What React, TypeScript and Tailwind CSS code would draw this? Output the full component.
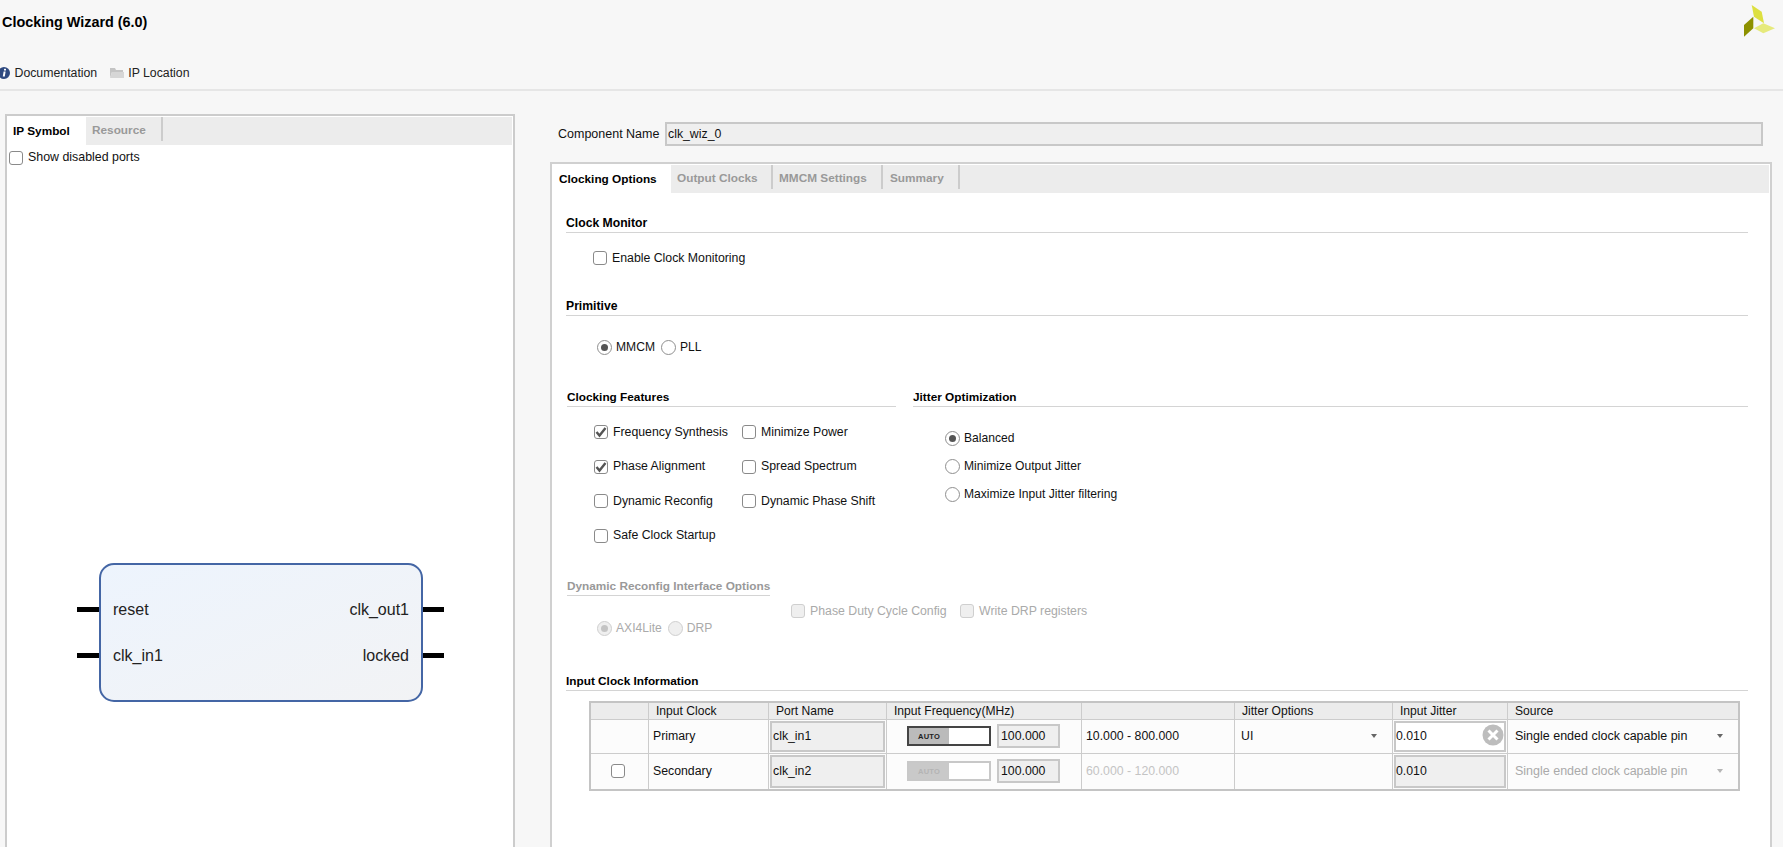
import type { ReactNode } from "react";

const font = "font-['Liberation_Sans',Arial,sans-serif]";

const Check = ({ checked, disabled }: { checked?: boolean; disabled?: boolean }) => (
  <span
    className={`flex h-[14px] w-[14px] shrink-0 items-center justify-center rounded-[3px] border-[1.5px] ${
      disabled ? "border-[#cfcfcf] bg-[#efefef]" : "border-[#8a8a8a] bg-white"
    }`}
  >
    {checked && (
      <svg width="12" height="12" viewBox="0 0 12 12">
        <path d="M1.5 6 L4.5 9.5 L10.5 2" fill="none" stroke="#555" strokeWidth="2.4" />
      </svg>
    )}
  </span>
);

const Radio = ({ checked, disabled }: { checked?: boolean; disabled?: boolean }) => (
  <span
    className={`flex h-[15px] w-[15px] shrink-0 items-center justify-center rounded-full border-[1.5px] ${
      disabled ? "border-[#cfcfcf] bg-[#efefef]" : "border-[#8f8f8f] bg-white"
    }`}
  >
    {checked && <span className={`h-[7px] w-[7px] rounded-full ${disabled ? "bg-[#c4c4c4]" : "bg-[#555]"}`} />}
  </span>
);

const Opt = ({ label, checked, disabled, className = "" }: { label: string; checked?: boolean; disabled?: boolean; className?: string }) => (
  <div className={`flex items-center gap-[5px] ${disabled ? "text-[#aaa]" : "text-[#111]"} ${className}`}>
    <Check checked={checked} disabled={disabled} />
    <span>{label}</span>
  </div>
);

const RadioOpt = ({ label, checked, disabled, className = "" }: { label: string; checked?: boolean; disabled?: boolean; className?: string }) => (
  <div className={`flex items-center gap-[4px] text-[12.1px] ${disabled ? "text-[#aaa]" : "text-[#111]"} ${className}`}>
    <Radio checked={checked} disabled={disabled} />
    <span>{label}</span>
  </div>
);

const SectionHead = ({ title, className = "", muted }: { title: string; className?: string; muted?: boolean }) => (
  <div className={`h-[19px] whitespace-nowrap border-b border-[#d4d4d4] font-bold leading-[18px] ${muted ? "text-[#999]" : "text-black"} ${className}`}>
    {title}
  </div>
);

const Arrow = ({ muted }: { muted?: boolean }) => (
  <svg width="6" height="4" viewBox="0 0 6 4" className="shrink-0">
    <path d="M0 0 H6 L3 4 Z" fill={muted ? "#b5b5b5" : "#666"} />
  </svg>
);

const Toggle = ({ disabled }: { disabled?: boolean }) => (
  <div className={`flex h-5 w-[84px] border-2 ${disabled ? "border-[#c8c8c8]" : "border-[#444]"}`}>
    <span
      className={`flex w-[40px] items-center justify-center text-[7.5px] font-bold tracking-[0.2px] ${
        disabled ? "bg-[#c9c9c9] text-[#b4b4b4]" : "bg-[#bbb] text-[#222]"
      }`}
    >
      AUTO
    </span>
    <span className="flex-1 bg-white" />
  </div>
);

const Cell = ({ children, className = "" }: { children?: ReactNode; className?: string }) => (
  <div className={`flex items-center border-r border-[#ccc] ${className}`}>{children}</div>
);

const Field = ({ children, className = "" }: { children: ReactNode; className?: string }) => (
  <div className={`flex items-center border-2 border-[#c8c8c8] bg-[#efefef] text-[#111] ${className}`}>{children}</div>
);

const cols = "grid grid-cols-[58px_120px_118px_195px_153px_158px_115px_1fr]";

const FreqCell = ({ disabled }: { disabled?: boolean }) => (
  <Cell className="pl-[20px]">
    <Toggle disabled={disabled} />
    <Field className="ml-[6px] h-6 w-[63px] pl-[2px]">100.000</Field>
  </Cell>
);

export default function App() {
  return (
    <div className={`${font} h-[847px] w-[1783px] overflow-hidden bg-[#f7f7f7] text-[12.3px] text-[#111]`}>
      <header className="relative h-[91px] border-b-2 border-[#e6e6e6]">
        <div className="pl-[2px] pt-[13px] text-[14.4px] font-bold leading-[18px] text-black">Clocking Wizard (6.0)</div>
        <svg width="32" height="34" viewBox="0 0 32 34" className="absolute right-[7px] top-[4px]">
          <polygon points="7.7,1 17.7,7.7 20,19.3 10,12.7" fill="#dde040" />
          <polygon points="0,21 9.3,12.7 9.3,24.3 0,32.7" fill="#8d9100" />
          <polygon points="10,24.3 19.3,19.3 31,24.3 19.3,29.3" fill="#e6ea7c" />
        </svg>
        <nav className="flex items-center pt-[34px] leading-[16px] text-[#222]">
          <svg width="11" height="14" viewBox="0 0 11 14" className="mr-[3.5px]">
            <circle cx="4" cy="7" r="6" fill="#2f4a80" />
            <path d="M3.6 5.6 H5.6 L4.8 10.6 H2.8 Z" fill="#fff" />
            <rect x="4" y="2.8" width="2" height="1.7" fill="#fff" />
          </svg>
          <span>Documentation</span>
          <svg width="14" height="12" viewBox="0 0 14 12" className="ml-[13px] mr-[4px]">
            <path d="M0 1 H5 L6 3 H13 V5 H2 L0 11 Z" fill="#c4c4c4" />
            <path d="M2 5 H14 V11 H0 Z" fill="#d6d6d6" />
          </svg>
          <span>IP Location</span>
        </nav>
      </header>

      <main className="flex items-start">
        <section className="ml-[5px] mt-[23px] h-[800px] w-[510px] border-2 border-[#ccc] bg-white">
          <div className="mx-px mt-px flex h-[28px] items-center bg-[#ececec] text-[11.8px] font-bold">
            <div className="flex h-full w-[78px] items-center bg-white pl-[5px] pt-[2px] text-black">IP Symbol</div>
            <div className="flex h-[24px] w-[77px] items-center self-start border-r-2 border-[#ccc] pl-[6px] pt-[4px] text-[#999]">Resource</div>
          </div>
          <Opt label="Show disabled ports" className="ml-[2px] mt-[5px] h-[15px] text-[12.4px]" />

          <div className="ml-[70px] mt-[398px] flex items-center">
            <div className="flex flex-col gap-[41px]">
              <span className="h-[5px] w-[22px] bg-black" />
              <span className="h-[5px] w-[22px] bg-black" />
            </div>
            <div className="h-[139px] w-[324px] rounded-[15px] border-2 border-[#4466a5] bg-gradient-to-br from-[#edf4fd] to-[#f2f3f5] text-[16px] leading-[18px] text-[#222]">
              <div className="flex justify-between pl-[12px] pr-[12px] pt-[36px]">
                <span>reset</span>
                <span>clk_out1</span>
              </div>
              <div className="flex justify-between pl-[12px] pr-[12px] pt-[28px]">
                <span>clk_in1</span>
                <span>locked</span>
              </div>
            </div>
            <div className="flex flex-col gap-[41px]">
              <span className="h-[5px] w-[21px] bg-black" />
              <span className="h-[5px] w-[21px] bg-black" />
            </div>
          </div>
        </section>

        <div className="ml-[35px] w-[1222px]">
          <div className="mt-[31px] flex h-[24px] items-center">
            <span className="ml-[8px] w-[107px] whitespace-nowrap text-[12.5px]">Component Name</span>
            <Field className="h-[24px] w-[1098px] pl-px">clk_wiz_0</Field>
          </div>

          <section className="mt-[16px] h-[700px] w-[1222px] border-2 border-[#d0d0d0] bg-white">
            <div className="mx-px mt-px flex h-[28px] bg-[#ececec] text-[11.8px] font-bold text-[#999]">
              <div className="flex w-[118px] items-center bg-white pl-[6px] pt-[2px] text-black">Clocking Options</div>
              <div className="flex h-[24px] w-[102px] items-center border-r-2 border-[#ccc] pl-[6px] pt-[4px]">Output Clocks</div>
              <div className="flex h-[24px] w-[110px] items-center border-r-2 border-[#ccc] pl-[6px] pt-[4px]">MMCM Settings</div>
              <div className="flex h-[24px] w-[77px] items-center border-r-2 border-[#ccc] pl-[7px] pt-[4px]">Summary</div>
            </div>

            <div className="pl-[14px] pr-[22px] pt-[21px]">
              <SectionHead title="Clock Monitor" className="text-[12.2px]" />
              <Opt label="Enable Clock Monitoring" className="ml-[27px] mt-[18px] h-[14px]" />

              <SectionHead title="Primitive" className="mt-[32px] text-[12.2px]" />
              <div className="ml-[31px] mt-[24px] flex h-[15px] gap-[6px]">
                <RadioOpt label="MMCM" checked />
                <RadioOpt label="PLL" />
              </div>

              <div className="mt-[33px] flex">
                <div className="ml-px w-[329px]">
                  <SectionHead title="Clocking Features" className="text-[11.8px]" />
                  <div className="ml-[27px] mt-[16px] grid grid-cols-[148px_1fr] gap-y-[16px]">
                    <Opt label="Frequency Synthesis" checked />
                    <Opt label="Minimize Power" />
                    <Opt label="Phase Alignment" checked />
                    <Opt label="Spread Spectrum" />
                    <Opt label="Dynamic Reconfig" />
                    <Opt label="Dynamic Phase Shift" />
                    <Opt label="Safe Clock Startup" />
                  </div>
                </div>
                <div className="ml-[17px] flex-1">
                  <SectionHead title="Jitter Optimization" className="text-[11.8px]" />
                  <div className="ml-[32px] mt-[22px] flex flex-col gap-[10px]">
                    <RadioOpt label="Balanced" checked />
                    <RadioOpt label="Minimize Output Jitter" />
                    <RadioOpt label="Maximize Input Jitter filtering" />
                  </div>
                </div>
              </div>

              <SectionHead title="Dynamic Reconfig Interface Options" muted className="ml-px mt-[32px] w-[203px] text-[11.8px]" />
              <div className="flex">
                <div className="ml-[31px] mt-[25px] flex h-[15px] w-[194px] gap-[6px]">
                  <RadioOpt label="AXI4Lite" checked disabled />
                  <RadioOpt label="DRP" disabled />
                </div>
                <div className="mt-[8px] flex h-[14px]">
                  <Opt label="Phase Duty Cycle Config" disabled className="w-[169px]" />
                  <Opt label="Write DRP registers" disabled />
                </div>
              </div>

              <SectionHead title="Input Clock Information" className="mt-[36px] text-[11.8px]" />

              <div className="ml-[23px] mt-[10px] w-[1151px] border-2 border-[#c4c4c4] bg-[#fcfcfc]">
                <div className={`${cols} h-[17px] border-b border-[#ccc] bg-[#ececec] text-[12.1px] leading-[16px]`}>
                  <Cell />
                  <Cell className="pl-[7px]">Input Clock</Cell>
                  <Cell className="pl-[7px]">Port Name</Cell>
                  <Cell className="pl-[7px]">Input Frequency(MHz)</Cell>
                  <Cell />
                  <Cell className="pl-[7px]">Jitter Options</Cell>
                  <Cell className="pl-[7px]">Input Jitter</Cell>
                  <div className="flex items-center pl-[7px]">Source</div>
                </div>

                <div className={`${cols} h-[34px] border-b border-[#ccc]`}>
                  <Cell />
                  <Cell className="pl-[4px]">Primary</Cell>
                  <Cell className="p-px">
                    <Field className="h-full w-full pl-px">clk_in1</Field>
                  </Cell>
                  <FreqCell />
                  <Cell className="pl-[4px]">10.000 - 800.000</Cell>
                  <Cell className="justify-between pl-[6px] pr-[15px]">
                    UI
                    <Arrow />
                  </Cell>
                  <Cell className="p-px">
                    <div className="relative flex h-full w-full items-center border-2 border-[#c8c8c8] bg-white">
                      0.010
                      <svg width="22" height="22" viewBox="0 0 22 22" className="absolute right-0 top-px">
                        <circle cx="11" cy="11" r="10.5" fill="#bdbdbd" />
                        <path d="M6.5 6.5 L15.5 15.5 M15.5 6.5 L6.5 15.5" stroke="#fff" strokeWidth="3" />
                      </svg>
                    </div>
                  </Cell>
                  <div className="flex items-center justify-between pl-[7px] pr-[15px]">
                    <span className="text-[12.5px]">Single ended clock capable pin</span>
                    <Arrow />
                  </div>
                </div>

                <div className={`${cols} h-[35px]`}>
                  <Cell className="justify-center pr-[4px]">
                    <Check />
                  </Cell>
                  <Cell className="pl-[4px]">Secondary</Cell>
                  <Cell className="p-px">
                    <Field className="h-full w-full pl-px">clk_in2</Field>
                  </Cell>
                  <FreqCell disabled />
                  <Cell className="pl-[4px] text-[#c4c4c4]">60.000 - 120.000</Cell>
                  <Cell />
                  <Cell className="p-px">
                    <Field className="h-full w-full">0.010</Field>
                  </Cell>
                  <div className="flex items-center justify-between pl-[7px] pr-[15px] text-[#aaa]">
                    <span className="text-[12.5px]">Single ended clock capable pin</span>
                    <Arrow muted />
                  </div>
                </div>
              </div>
            </div>
          </section>
        </div>
      </main>
    </div>
  );
}
